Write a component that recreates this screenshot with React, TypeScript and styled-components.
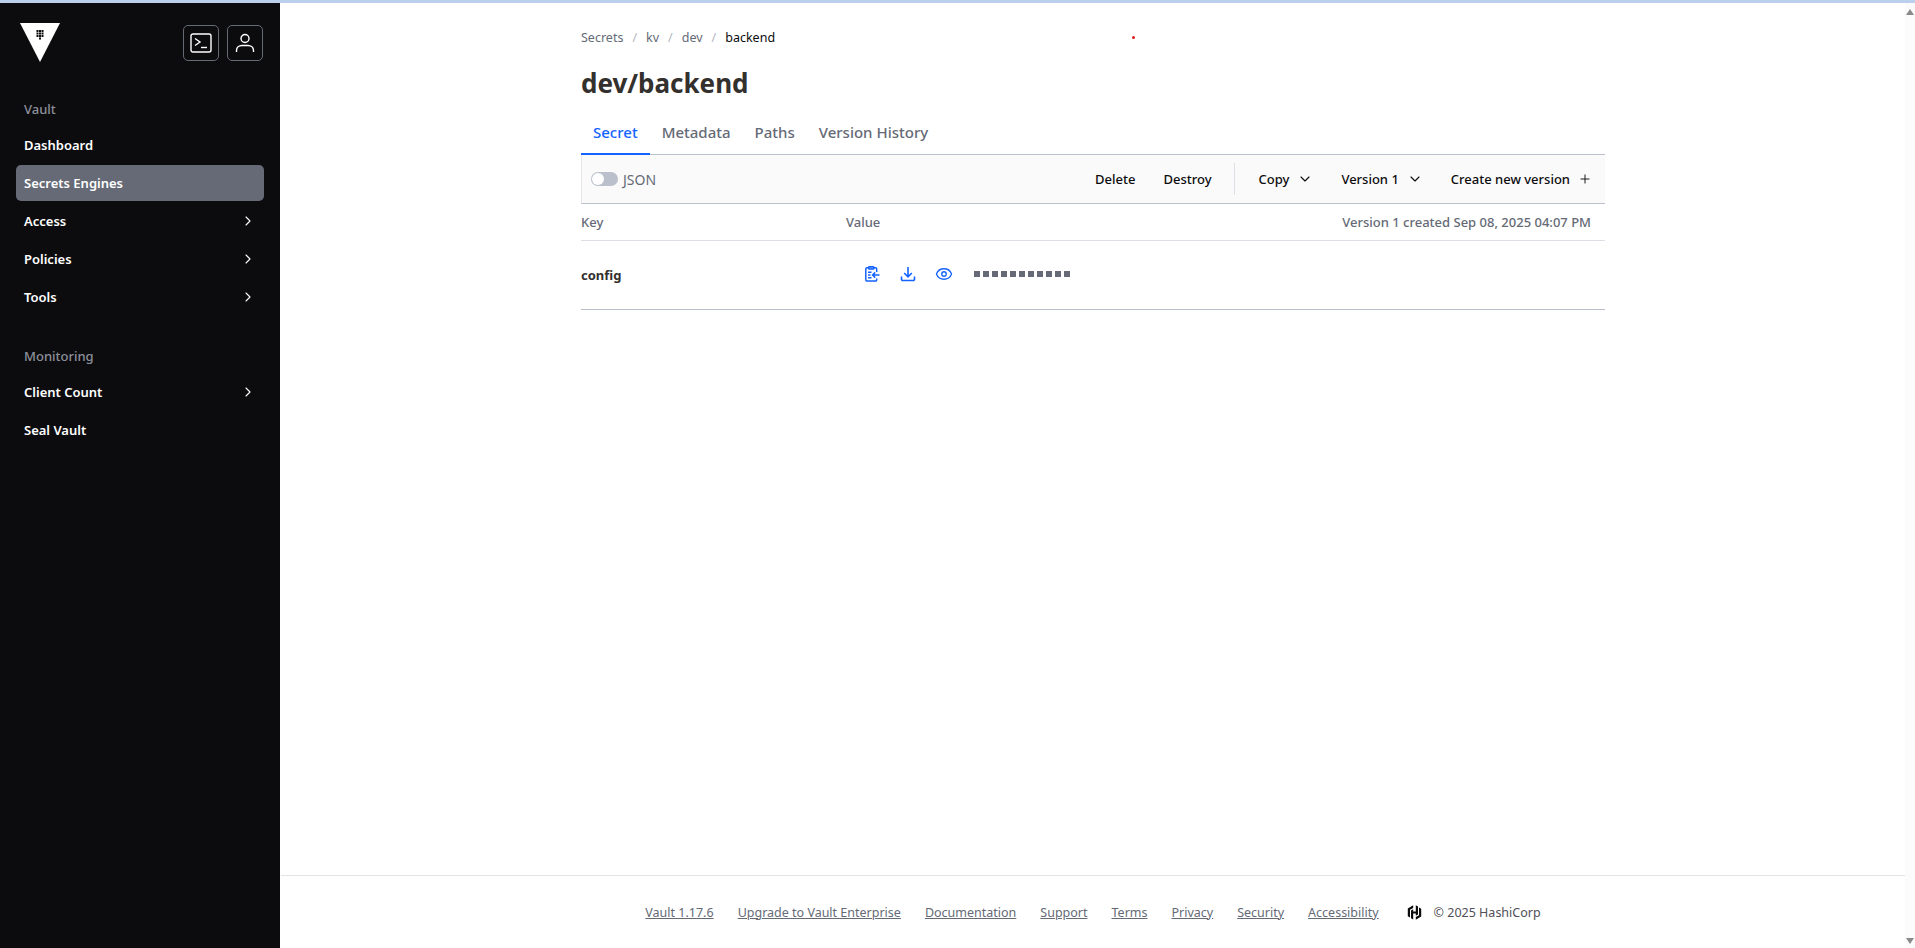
import React from 'react';
import styled, { createGlobalStyle } from 'styled-components';
import { ChevronDown, ChevronRight, Eye, Plus } from 'lucide-react';

const GlobalStyle = createGlobalStyle`
  html, body {
    margin: 0;
    padding: 0;
    height: 948px;
    overflow: hidden;
    background: #fff;
    font-family: "Noto Sans", "Open Sans", "Liberation Sans", sans-serif;
  }
  * { box-sizing: border-box; }
`;

const navTop = [
  { label: 'Dashboard' },
  { label: 'Secrets Engines', active: true },
  { label: 'Access', more: true },
  { label: 'Policies', more: true },
  { label: 'Tools', more: true },
];
const navBottom = [{ label: 'Client Count', more: true }, { label: 'Seal Vault' }];
const footerLinks = [
  'Vault 1.17.6',
  'Upgrade to Vault Enterprise',
  'Documentation',
  'Support',
  'Terms',
  'Privacy',
  'Security',
  'Accessibility',
];

function VaultLogo() {
  const dots = [
    [16.5, 7], [19, 7], [21.5, 7],
    [16.5, 9.5], [19, 9.5], [21.5, 9.5],
    [16.5, 12], [19, 12], [21.5, 12],
    [19, 14.5],
  ];
  return (
    <svg width="40" height="39" viewBox="0 0 40 39">
      <path d="M0 0H40L20 39Z" fill="#fff" />
      {dots.map(([x, y]) => (
        <rect key={`${x}-${y}`} x={x} y={y} width="2" height="2" fill="#0c0c0e" />
      ))}
    </svg>
  );
}

function TerminalIcon() {
  return (
    <svg width="22" height="20" viewBox="0 0 22 20" fill="none" stroke="#fff" strokeWidth="1.4">
      <rect x="1" y="1" width="20" height="18" rx="2" />
      <path d="M5 5.5L10 9L5 12.5" />
      <path d="M11 14.5H17" />
    </svg>
  );
}

function UserIcon() {
  return (
    <svg width="20" height="20" viewBox="0 0 20 20" fill="none" stroke="#fff" strokeWidth="1.4">
      <circle cx="10" cy="5.5" r="4" />
      <path d="M1.5 19V17.5C1.5 14.5 4 12.5 7 12.5H13C16 12.5 18.5 14.5 18.5 17.5V19" />
    </svg>
  );
}

function ClipboardIcon() {
  return (
    <svg width="16" height="16" viewBox="0 0 16 16" fill="none" stroke="#1563ff" strokeWidth="1.5">
      <path d="M4.5 1.8H3A1.2 1.2 0 0 0 1.8 3V13.8A1.2 1.2 0 0 0 3 15H11.5A1.2 1.2 0 0 0 12.7 13.8V12.5" />
      <path d="M10 1.8H11.5A1.2 1.2 0 0 1 12.7 3V6" />
      <rect x="4.6" y="0.8" width="5.2" height="2.2" rx="0.6" fill="#1563ff" fillOpacity="0.5" />
      <path d="M4 6.2H7.5M4 9H6.5M4 11.8H7.5" />
      <path d="M15.5 9H8.8M11.2 6.4L8.6 9L11.2 11.6" />
    </svg>
  );
}

function DownloadIcon() {
  return (
    <svg width="16" height="16" viewBox="0 0 16 16" fill="none" stroke="#1563ff" strokeWidth="1.6">
      <path d="M8 1V10.5M4.2 7L8 10.8L11.8 7" />
      <path d="M1.5 10.5V13.2A1.3 1.3 0 0 0 2.8 14.5H13.2A1.3 1.3 0 0 0 14.5 13.2V10.5" />
    </svg>
  );
}

function HashiLogo() {
  return (
    <svg width="15" height="15" viewBox="0 0 15 15" fill="#0c0c0e">
      <path d="M6.2 0.3L0.8 3.4V11.2L3 12.5V4.7L6.2 2.9Z" />
      <path d="M8.8 0.3V6.4H6.2V4.3L4 5.6V13.2L6.2 14.5V8.6H8.8V10.7L11 9.4V1.6Z" />
      <path d="M8.8 14.7L14.2 11.6V3.8L12 2.5V10.3L8.8 12.1Z" />
    </svg>
  );
}

export default function App() {
  return (
    <>
      <GlobalStyle />
      <Page>
        <TopLine />
        <Body>
          <Sidebar>
            <SideHeader>
              <VaultLogo />
              <HeaderButtons>
                <IconButton><TerminalIcon /></IconButton>
                <IconButton><UserIcon /></IconButton>
              </HeaderButtons>
            </SideHeader>
            <SectionTitle>Vault</SectionTitle>
            <NavList>
              {navTop.map((n) => (
                <NavItem key={n.label} $active={n.active}>
                  {n.label}
                  {n.more && <ChevronRight size={16} color="#fff" strokeWidth={1.6} />}
                </NavItem>
              ))}
            </NavList>
            <SectionTitle $spaced>Monitoring</SectionTitle>
            <NavList>
              {navBottom.map((n) => (
                <NavItem key={n.label}>
                  {n.label}
                  {n.more && <ChevronRight size={16} color="#fff" strokeWidth={1.6} />}
                </NavItem>
              ))}
            </NavList>
          </Sidebar>
          <Main>
            <Content>
              <Crumbs>
                <Crumb>Secrets</Crumb>
                <Slash>/</Slash>
                <Crumb>kv</Crumb>
                <Slash>/</Slash>
                <Crumb>dev</Crumb>
                <Slash>/</Slash>
                <Crumb $current>backend</Crumb>
              </Crumbs>
              <Title>dev/backend</Title>
              <Tabs>
                <Tab $active>Secret</Tab>
                <Tab>Metadata</Tab>
                <Tab>Paths</Tab>
                <Tab>Version History</Tab>
              </Tabs>
              <Toolbar>
                <ToggleWrap>
                  <Toggle />
                  <ToggleLabel>JSON</ToggleLabel>
                </ToggleWrap>
                <ToolActions>
                  <ToolButton>Delete</ToolButton>
                  <ToolButton>Destroy</ToolButton>
                  <Divider />
                  <ToolButton>Copy <ChevronDown size={16} strokeWidth={1.6} /></ToolButton>
                  <ToolButton>Version 1 <ChevronDown size={16} strokeWidth={1.6} /></ToolButton>
                  <ToolButton>Create new version <Plus size={14} strokeWidth={1.6} /></ToolButton>
                </ToolActions>
              </Toolbar>
              <HeadRow>
                <KeyHead>Key</KeyHead>
                <ValueHead>Value</ValueHead>
                <Created>Version 1 created Sep 08, 2025 04:07 PM</Created>
              </HeadRow>
              <DataRow>
                <KeyCell>config</KeyCell>
                <ValueCell>
                  <RowIcon><ClipboardIcon /></RowIcon>
                  <RowIcon><DownloadIcon /></RowIcon>
                  <RowIcon><Eye size={18} color="#1563ff" strokeWidth={1.8} /></RowIcon>
                  <Masked>
                    {Array.from({ length: 11 }).map((_, i) => (
                      <MaskDot key={i} />
                    ))}
                  </Masked>
                </ValueCell>
              </DataRow>
            </Content>
            <RedDot />
            <Footer>
              {footerLinks.map((l) => (
                <FooterLink key={l}>{l}</FooterLink>
              ))}
              <Copyright>
                <HashiLogo />
                <span>© 2025 HashiCorp</span>
              </Copyright>
            </Footer>
          </Main>
          <ScrollTrack>
            <ArrowUp />
            <ArrowDown />
          </ScrollTrack>
        </Body>
      </Page>
    </>
  );
}

const Page = styled.div`
  width: 1915px;
  height: 948px;
  display: flex;
  flex-direction: column;
  overflow: hidden;
`;

const TopLine = styled.div`
  height: 3px;
  flex: none;
  background: #bccfec;
`;

const Body = styled.div`
  flex: 1;
  min-height: 0;
  display: flex;
`;

const Sidebar = styled.aside`
  width: 280px;
  flex: none;
  background: #0c0c0e;
  padding: 0 16px;
`;

const SideHeader = styled.div`
  height: 85px;
  padding: 20px 0 0 4px;
  display: flex;
  justify-content: space-between;
  align-items: flex-start;
`;

const HeaderButtons = styled.div`
  display: flex;
  gap: 8px;
  margin: 2px 1px 0 0;
`;

const IconButton = styled.div`
  width: 36px;
  height: 36px;
  border: 1px solid #656a76;
  border-radius: 5px;
  display: flex;
  align-items: center;
  justify-content: center;
`;

const SectionTitle = styled.div<{ $spaced?: boolean }>`
  height: 36px;
  margin-top: ${({ $spaced }) => ($spaced ? '23px' : '3px')};
  padding-left: 8px;
  display: flex;
  align-items: center;
  font-size: 13px;
  font-weight: 500;
  color: #8c909c;
`;

const NavList = styled.div`
  display: flex;
  flex-direction: column;
  gap: 2px;
`;

const NavItem = styled.div<{ $active?: boolean }>`
  height: 36px;
  padding: 0 8px;
  display: flex;
  align-items: center;
  justify-content: space-between;
  border-radius: 5px;
  font-size: 13px;
  font-weight: 600;
  color: #fff;
  background: ${({ $active }) => ($active ? '#656a76' : 'transparent')};
`;

const Main = styled.main`
  position: relative;
  flex: 1;
  min-width: 0;
  margin-left: 1px;
  display: flex;
  flex-direction: column;
  background: #fff;
`;

const Content = styled.div`
  width: 1024px;
  margin: 0 auto;
  flex: 1;
`;

const Crumbs = styled.nav`
  height: 20px;
  margin-top: 24px;
  display: flex;
  align-items: center;
  gap: 9px;
  font-size: 12.5px;
`;

const Crumb = styled.span<{ $current?: boolean }>`
  color: ${({ $current }) => ($current ? '#0c0c0e' : '#656a76')};
`;

const Slash = styled.span`
  color: #b2b6bd;
`;

const Title = styled.h1`
  margin: 14px 0 0;
  height: 44px;
  line-height: 44px;
  font-size: 26px;
  font-weight: 700;
  color: #33302e;
`;

const Tabs = styled.div`
  margin-top: 6px;
  display: flex;
`;

const Tab = styled.div<{ $active?: boolean }>`
  height: 44px;
  padding: 0 12px;
  margin-bottom: -1px;
  display: flex;
  align-items: center;
  font-size: 15px;
  font-weight: 500;
  color: ${({ $active }) => ($active ? '#1563ff' : '#656a76')};
  border-bottom: 2px solid ${({ $active }) => ($active ? '#1563ff' : 'transparent')};
  position: relative;
`;

const Toolbar = styled.div`
  height: 50px;
  display: flex;
  align-items: center;
  justify-content: space-between;
  background: #fafafa;
  border-top: 1px solid #bac1cc;
  border-bottom: 1px solid #bac1cc;
  border-left: 1px solid #e4e6ea;
  padding: 0 0 0 9px;
`;

const ToggleWrap = styled.div`
  display: flex;
  align-items: center;
  gap: 5px;
`;

const Toggle = styled.div`
  width: 27px;
  height: 14px;
  border-radius: 7px;
  background: #bac1cc;
  position: relative;

  &::after {
    content: '';
    position: absolute;
    left: 1px;
    top: 1px;
    width: 12px;
    height: 12px;
    border-radius: 50%;
    background: #fff;
  }
`;

const ToggleLabel = styled.span`
  font-size: 14px;
  color: #656a76;
`;

const ToolActions = styled.div`
  display: flex;
  align-items: center;
`;

const ToolButton = styled.div`
  height: 36px;
  padding: 0 13px 0 15px;
  display: flex;
  align-items: center;
  gap: 8px;
  font-size: 13px;
  font-weight: 500;
  color: #0c0c0e;
`;

const Divider = styled.div`
  width: 1px;
  height: 32px;
  background: #dce0e6;
  margin: 0 9px 0 9px;
`;

const HeadRow = styled.div`
  height: 37px;
  display: flex;
  align-items: center;
  border-bottom: 1px solid #dce0e6;
  font-size: 13px;
  font-weight: 500;
  color: #656a76;
`;

const KeyHead = styled.div`
  width: 265px;
`;

const ValueHead = styled.div`
  flex: 1;
`;

const Created = styled.div`
  padding-right: 14px;
`;

const DataRow = styled.div`
  height: 69px;
  display: flex;
  align-items: center;
  border-bottom: 1px solid #bac1cc;
`;

const KeyCell = styled.div`
  width: 273px;
  font-size: 13px;
  font-weight: 700;
  color: #33302e;
`;

const ValueCell = styled.div`
  display: flex;
  align-items: center;
  margin-top: -2px;
`;

const RowIcon = styled.div`
  width: 36px;
  display: flex;
  justify-content: center;
`;

const Masked = styled.div`
  margin-left: 12px;
  display: flex;
  gap: 3px;
`;

const MaskDot = styled.div`
  width: 6px;
  height: 6px;
  background: #656a76;
`;

const RedDot = styled.div`
  position: absolute;
  left: 851px;
  top: 33px;
  width: 3px;
  height: 3px;
  border-radius: 50%;
  background: #e01b1b;
`;

const Footer = styled.footer`
  height: 73px;
  flex: none;
  border-top: 1px solid #e4e4e4;
  display: flex;
  align-items: center;
  justify-content: center;
  gap: 24px;
  font-size: 12.5px;
  color: #656a76;
`;

const FooterLink = styled.a`
  text-decoration: underline;
  color: #656a76;
`;

const Copyright = styled.div`
  display: flex;
  align-items: center;
  gap: 12px;
  margin-left: 4px;
  color: #4f4f58;
`;

const ScrollTrack = styled.div`
  width: 10px;
  flex: none;
  background: #fbfbfb;
  display: flex;
  flex-direction: column;
  justify-content: space-between;
  align-items: center;
  padding: 6px 0 4px;
`;

const ArrowUp = styled.div`
  width: 0;
  height: 0;
  border-left: 4px solid transparent;
  border-right: 4px solid transparent;
  border-bottom: 6px solid #8a8a8a;
`;

const ArrowDown = styled.div`
  width: 0;
  height: 0;
  border-left: 4px solid transparent;
  border-right: 4px solid transparent;
  border-top: 6px solid #8a8a8a;
`;
